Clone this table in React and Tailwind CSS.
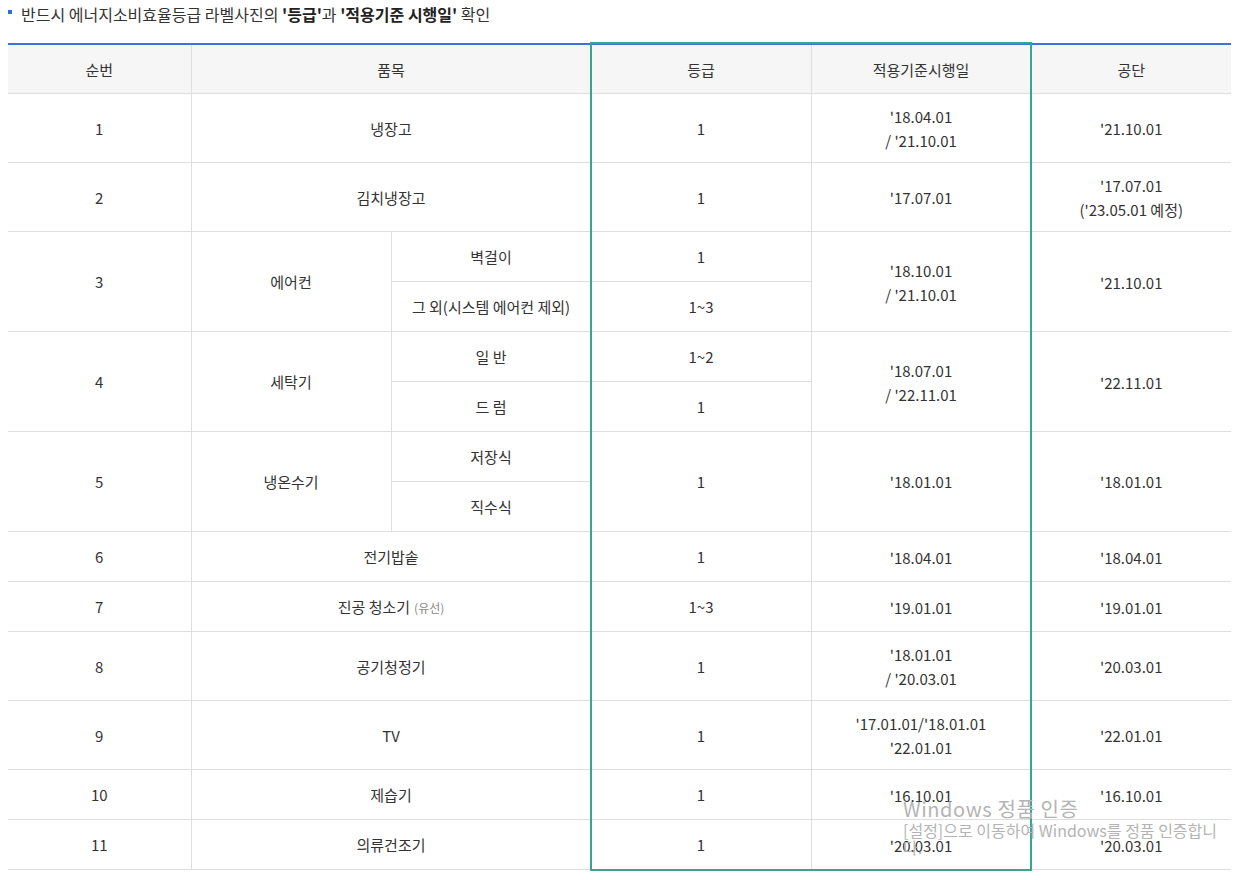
import React from 'react';

const font = { fontFamily: '"Noto Sans CJK KR", "Noto Sans", sans-serif' };

// simple rows: [no, item, grade, date lines, kemco lines]
const rows = [
  { no: '1', item: '냉장고', grade: '1', date: ["'18.04.01", "/ '21.10.01"], kemco: ["'21.10.01"], h: 'h-[69px]' },
  { no: '2', item: '김치냉장고', grade: '1', date: ["'17.07.01"], kemco: ["'17.07.01", "('23.05.01 예정)"], h: 'h-[69px]' },
];

const tail = [
  { no: '6', item: '전기밥솥', grade: '1', date: ["'18.04.01"], kemco: ["'18.04.01"], h: 'h-[50px]' },
  { no: '7', item: '진공 청소기', sub: '(유선)', grade: '1~3', date: ["'19.01.01"], kemco: ["'19.01.01"], h: 'h-[50px]' },
  { no: '8', item: '공기청정기', grade: '1', date: ["'18.01.01", "/ '20.03.01"], kemco: ["'20.03.01"], h: 'h-[69px]' },
  { no: '9', item: 'TV', grade: '1', date: ["'17.01.01/'18.01.01", "'22.01.01"], kemco: ["'22.01.01"], h: 'h-[69px]' },
  { no: '10', item: '제습기', grade: '1', date: ["'16.10.01"], kemco: ["'16.10.01"], h: 'h-[50px]' },
  { no: '11', item: '의류건조기', grade: '1', date: ["'20.03.01"], kemco: ["'20.03.01"], h: 'h-[50px]' },
];

const grouped = [
  { no: '3', item: '에어컨', subs: [['벽걸이', '1'], ['그 외(시스템 에어컨 제외)', '1~3']], date: ["'18.10.01", "/ '21.10.01"], kemco: ["'21.10.01"] },
  { no: '4', item: '세탁기', subs: [['일 반', '1~2'], ['드 럼', '1']], date: ["'18.07.01", "/ '22.11.01"], kemco: ["'22.11.01"] },
];

const td = 'border border-[#dedede] text-center align-middle p-0 pt-[3px]';

const Lines = ({ lines }) => (
  <div className="leading-[24px]">
    {lines.map((l, i) => (
      <div key={i}>{l}</div>
    ))}
  </div>
);

const SimpleRow = ({ r }) => (
  <tr className={r.h}>
    <td className={`${td} border-l-0`}>{r.no}</td>
    <td className={td} colSpan={2}>
      {r.item}
      {r.sub && <span className="ml-1 text-[12px] text-[#8a8a8a]">{r.sub}</span>}
    </td>
    <td className={td}>{r.grade}</td>
    <td className={td}><Lines lines={r.date} /></td>
    <td className={`${td} border-r-0`}><Lines lines={r.kemco} /></td>
  </tr>
);

export default function App() {
  return (
    <div className="relative w-[1240px] h-[880px] bg-white text-[#333] text-[15px]" style={font}>
      <div className="flex items-center h-[28px] pl-[8px]">
        <span className="w-[4px] h-[4px] bg-[#2e6fd4] mr-[9px] -mt-[4px]"></span>
        <span className="text-[16px] text-[#333]">
          반드시 에너지소비효율등급 라벨사진의 <b className="font-bold text-[#222]">'등급'</b>과{' '}
          <b className="font-bold text-[#222]">'적용기준 시행일'</b> 확인
        </span>
      </div>

      <div className="relative ml-[8px] mt-[15px] w-[1223px]">
        <table className="w-[1223px] table-fixed border-collapse border-t-2 border-t-[#3a74d6]">
          <colgroup>
            <col className="w-[183px]" />
            <col className="w-[200px]" />
            <col className="w-[200px]" />
            <col className="w-[220px]" />
            <col className="w-[220px]" />
            <col className="w-[200px]" />
          </colgroup>
          <thead>
            <tr className="h-[49px] bg-[#f6f6f6]">
              <th className={`${td} border-t-0 border-l-0 font-normal`}>순번</th>
              <th className={`${td} border-t-0 font-normal`} colSpan={2}>품목</th>
              <th className={`${td} border-t-0 font-normal`}>등급</th>
              <th className={`${td} border-t-0 font-normal`}>적용기준시행일</th>
              <th className={`${td} border-t-0 border-r-0 font-normal`}>공단</th>
            </tr>
          </thead>
          <tbody>
            {rows.map((r) => (
              <SimpleRow key={r.no} r={r} />
            ))}
            {grouped.map((g) => (
              <React.Fragment key={g.no}>
                <tr className="h-[50px]">
                  <td className={`${td} border-l-0`} rowSpan={2}>{g.no}</td>
                  <td className={td} rowSpan={2}>{g.item}</td>
                  <td className={td}>{g.subs[0][0]}</td>
                  <td className={td}>{g.subs[0][1]}</td>
                  <td className={td} rowSpan={2}><Lines lines={g.date} /></td>
                  <td className={`${td} border-r-0`} rowSpan={2}><Lines lines={g.kemco} /></td>
                </tr>
                <tr className="h-[50px]">
                  <td className={td}>{g.subs[1][0]}</td>
                  <td className={td}>{g.subs[1][1]}</td>
                </tr>
              </React.Fragment>
            ))}
            <tr className="h-[50px]">
              <td className={`${td} border-l-0`} rowSpan={2}>5</td>
              <td className={td} rowSpan={2}>냉온수기</td>
              <td className={td}>저장식</td>
              <td className={td} rowSpan={2}>1</td>
              <td className={td} rowSpan={2}>'18.01.01</td>
              <td className={`${td} border-r-0`} rowSpan={2}>'18.01.01</td>
            </tr>
            <tr className="h-[50px]">
              <td className={td}>직수식</td>
            </tr>
            {tail.map((r) => (
              <SimpleRow key={r.no} r={r} />
            ))}
          </tbody>
        </table>
        {/* highlight box over grade + date columns */}
        <div className="absolute left-[582px] top-[-1px] w-[442px] bottom-[-1px] border-2 border-[#3aa58f] pointer-events-none"></div>
      </div>

      {/* windows activation watermark */}
      <div className="absolute left-[903px] top-[796px] w-[322px] text-[#b4b4b4] pointer-events-none" style={{ fontFamily: '"Noto Sans CJK KR", sans-serif' }}>
        <div className="text-[20px] leading-[26px] tracking-[0.6px]">Windows 정품 인증</div>
        <div className="text-[16px] leading-[17px]">[설정]으로 이동하여 Windows를 정품 인증합니다.</div>
      </div>
    </div>
  );
}
